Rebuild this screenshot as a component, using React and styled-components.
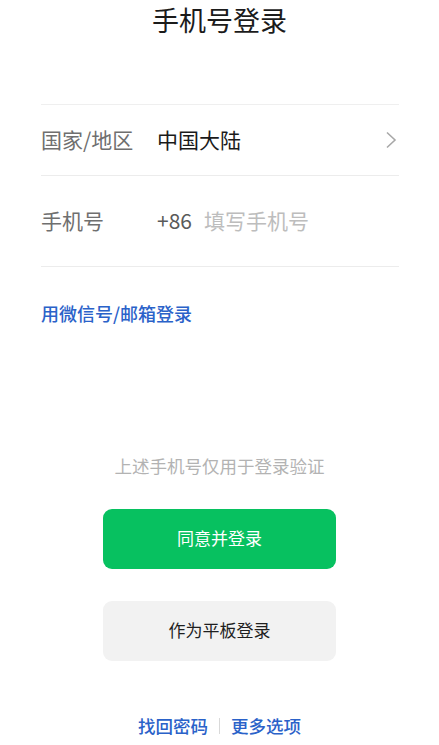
import React from "react";
import styled, { createGlobalStyle } from "styled-components";

const GlobalStyle = createGlobalStyle`
  body {
    margin: 0;
    background: #ffffff;
    font-family: "Noto Sans CJK SC", "Noto Sans", sans-serif;
  }
`;

const Page = styled.div`
  width: 439px;
  height: 745px;
  display: flex;
  flex-direction: column;
  overflow: hidden;
`;

const Title = styled.h1`
  margin: 0;
  height: 44px;
  line-height: 40px;
  padding-bottom: 4px;
  box-sizing: border-box;
  text-align: center;
  font-size: 27px;
  font-weight: 400;
  color: #1b1b1b;
`;

const Form = styled.div`
  margin: 60px 40px 0 41px;
  border-top: 1px solid #efefef;
`;

const Row = styled.div`
  display: flex;
  align-items: center;
  box-sizing: border-box;
  height: ${(p) => p.$h}px;
  padding-bottom: 3px;
  border-bottom: 1px solid #ececec;
  font-size: 21px;
`;

const Label = styled.span`
  width: 116px;
  color: #6f6f6f;
`;

const Value = styled.span`
  flex: 1;
  color: #1a1a1a;
`;

const Prefix = styled.span`
  color: #5a5a5a;
  margin-right: 12px;
`;

const Placeholder = styled.span`
  color: #bdbdbd;
`;

const Chevron = styled.svg`
  width: 12px;
  height: 18px;
  margin-right: 2px;
  margin-top: 3px;
`;

const Link = styled.a`
  color: #2a62c9;
  text-decoration: none;
  font-size: 18px;
  font-weight: 500;
  line-height: 24px;
`;

const AltLink = styled(Link)`
  margin: 34px 0 0 41px;
  align-self: flex-start;
`;

const Hint = styled.p`
  margin: 129px 0 0;
  text-align: center;
  font-size: 17.5px;
  line-height: 24px;
  color: #b3b3b3;
`;

const Button = styled.button`
  display: block;
  width: 233px;
  height: 60px;
  margin: ${(p) => p.$mt}px auto 0;
  padding: 0 0 3px;
  border: none;
  border-radius: 9px;
  background: ${(p) => (p.$primary ? "#07c160" : "#f2f2f2")};
  color: ${(p) => (p.$primary ? "#ffffff" : "#1f1f1f")};
  font-family: inherit;
  font-size: 17px;
`;

const Footer = styled.div`
  margin-top: 53px;
  display: flex;
  justify-content: center;
  align-items: center;
  gap: 11px;
`;

const FooterLink = styled(Link)`
  font-size: 17.5px;
`;

const Sep = styled.span`
  width: 1px;
  height: 16px;
  background: #d9d9d9;
`;

export default function App() {
  return (
    <Page>
      <GlobalStyle />
      <Title>手机号登录</Title>
      <Form>
        <Row $h={71}>
          <Label>国家/地区</Label>
          <Value>中国大陆</Value>
          <Chevron viewBox="0 0 12 18">
            <path d="M2 1.5 L10 9 L2 16.5" fill="none" stroke="#a8a8a8" strokeWidth="1.6" />
          </Chevron>
        </Row>
        <Row $h={91}>
          <Label>手机号</Label>
          <Prefix>+86</Prefix>
          <Placeholder>填写手机号</Placeholder>
        </Row>
      </Form>
      <AltLink>用微信号/邮箱登录</AltLink>
      <Hint>上述手机号仅用于登录验证</Hint>
      <Button $primary $mt={31}>同意并登录</Button>
      <Button $mt={32}>作为平板登录</Button>
      <Footer>
        <FooterLink>找回密码</FooterLink>
        <Sep />
        <FooterLink>更多选项</FooterLink>
      </Footer>
    </Page>
  );
}
